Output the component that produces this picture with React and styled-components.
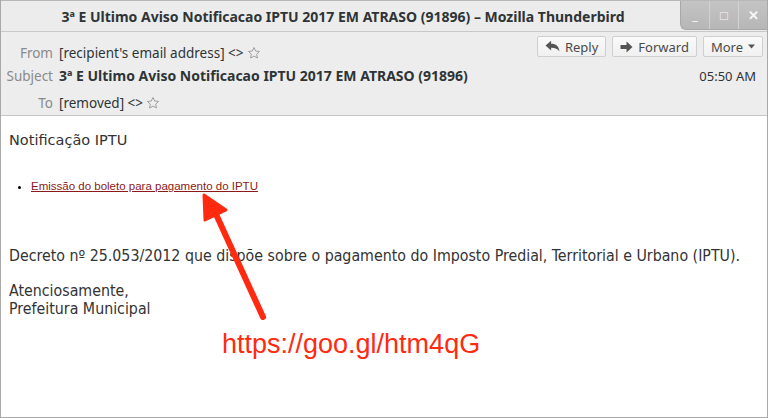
import React from 'react'
import styled, { createGlobalStyle } from 'styled-components'

const GlobalStyle = createGlobalStyle`
  html, body {
    margin: 0;
    padding: 0;
    background: #fff;
  }
`

const Window = styled.div`
  position: relative;
  width: 768px;
  height: 418px;
  box-sizing: border-box;
  border: 1px solid #a9a9a9;
  border-top: none;
  display: flex;
  flex-direction: column;
  overflow: hidden;
  font-family: 'Noto Sans', 'Open Sans', sans-serif;
`

const TitleBar = styled.div`
  position: relative;
  height: 32px;
  flex: none;
  display: flex;
  align-items: center;
  justify-content: center;
  background: #ececec;
  border-bottom: 1px solid #c8c8c8;
  border-top: 1px solid #b8b8b8;
  box-sizing: border-box;
  padding-right: 82px;
  font-size: 14px;
  font-weight: 700;
  color: #2e3436;
`

const WinButtons = styled.div`
  position: absolute;
  top: 0;
  right: 0;
  height: 28px;
  display: flex;
  background: linear-gradient(#c4c4c4, #b6b6b6);
  border-bottom-left-radius: 6px;
  border-left: 1px solid #a8a8a8;
  border-bottom: 1px solid #a8a8a8;
`

const WinButton = styled.div`
  width: 28px;
  display: flex;
  align-items: center;
  justify-content: center;
  color: #f6f6f6;
  font-size: 13px;
  font-weight: 700;
  & + & {
    border-left: 1px solid #d2d2d2;
  }
`

const Header = styled.div`
  flex: none;
  height: 84px;
  background: #ededed;
  border-bottom: 1px solid #c6c6c6;
  display: grid;
  grid-template-columns: 1fr auto;
  padding: 5px 4px 0 0;
  box-sizing: border-box;
`

const Fields = styled.div`
  display: grid;
  grid-template-columns: 52px 1fr;
  grid-template-rows: 27px 23px 29px;
  column-gap: 6px;
  align-items: end;
  font-size: 13.5px;
  color: #2e3436;
`

const Label = styled.div`
  text-align: right;
  color: #8a8a8a;
  padding-bottom: ${p => p.pb || 0}px;
`

const Value = styled.div`
  display: flex;
  align-items: center;
  gap: 3px;
  white-space: nowrap;
  font-weight: ${p => (p.bold ? 700 : 400)};
  font-size: ${p => (p.bold ? '14px' : 'inherit')};
  padding-bottom: ${p => p.pb || 0}px;
`

const Side = styled.div`
  display: flex;
  flex-direction: column;
  align-items: flex-end;
  margin-top: -1px;
`

const Buttons = styled.div`
  display: flex;
  gap: 6px;
`

const Button = styled.div`
  height: 21px;
  box-sizing: border-box;
  padding: 0 7px;
  display: flex;
  align-items: center;
  gap: 5px;
  background: linear-gradient(#fafafa, #f0f0f0);
  border: 1px solid #cfcfcf;
  border-radius: 2px;
  font-size: 13px;
  color: #4a4a4a;
`

const Time = styled.div`
  margin-top: 10px;
  padding-right: 7px;
  font-size: 13px;
  color: #2e3436;
`

const Body = styled.div`
  position: relative;
  flex: 1;
  background: #fff;
  padding: 16px 8px 0;
  color: #333;
  font-family: 'DejaVu Sans Condensed', 'DejaVu Sans', sans-serif;
  font-stretch: condensed;
`

const Heading = styled.div`
  font-size: 14.5px;
  font-family: 'DejaVu Sans', sans-serif;
  font-stretch: normal;
  font-weight: 400;
  color: #333;
  margin-bottom: 32px;
`

const List = styled.ul`
  margin: 0 0 55px;
  padding-left: 22px;
  font-size: 11.5px;
  font-family: 'Liberation Sans', Arial, sans-serif;
  li::marker {
    color: #000;
  }
`

const Link = styled.a`
  color: #8b1a1a;
  text-decoration: underline;
`

const Para = styled.p`
  margin: 0 0 17px;
  font-size: 15.8px;
  line-height: 18px;
  white-space: nowrap;
`

const Annotation = styled.div`
  padding-left: 213px;
  margin-top: -6px;
  font-family: 'Liberation Sans', Arial, sans-serif;
  font-stretch: normal;
  font-size: 27px;
  color: #ff2a0f;
`

const ArrowLayer = styled.svg`
  position: absolute;
  left: 0;
  top: 0;
  pointer-events: none;
`

const Star = () => (
  <svg width="14" height="14" viewBox="0 0 24 24" fill="none" stroke="#9a9a9a" strokeWidth="1.6" strokeLinejoin="round">
    <path d="M12 2.5l2.9 6.1 6.6.8-4.9 4.6 1.3 6.6L12 17.3l-5.9 3.3 1.3-6.6-4.9-4.6 6.6-.8z" />
  </svg>
)

const ReplyIcon = () => (
  <svg width="15" height="13" viewBox="0 0 16 14">
    <path d="M0.5 6 L6.5 0.8 V4 C11.5 4 15 6.5 15.5 12.5 C13.8 9.6 11 8.4 6.5 8.4 V11.4 Z" fill="#555" />
  </svg>
)

const ForwardIcon = () => (
  <svg width="13" height="12" viewBox="0 0 13 12">
    <path d="M0.5 4 H6.5 V0.5 L12.5 6 L6.5 11.5 V8 H0.5 Z" fill="#555" />
  </svg>
)

const Caret = () => (
  <svg width="7" height="5" viewBox="0 0 7 5">
    <path d="M0 0.5 H7 L3.5 4.5 Z" fill="#555" />
  </svg>
)

const title = '3ª E Ultimo Aviso Notificacao IPTU 2017 EM ATRASO (91896)'

const App = () => (
  <Window>
    <GlobalStyle />
    <TitleBar>
      {title} – Mozilla Thunderbird
      <WinButtons>
        <WinButton>_</WinButton>
        <WinButton>□</WinButton>
        <WinButton>✕</WinButton>
      </WinButtons>
    </TitleBar>
    <Header>
      <Fields>
        <Label pb={2}>From</Label>
        <Value pb={2}>[recipient's email address] &lt;&gt;<Star /></Value>
        <Label pb={2}>Subject</Label>
        <Value bold pb={2}>{title}</Value>
        <Label pb={4}>To</Label>
        <Value pb={4}>[removed] &lt;&gt;<Star /></Value>
      </Fields>
      <Side>
        <Buttons>
          <Button><ReplyIcon />Reply</Button>
          <Button><ForwardIcon />Forward</Button>
          <Button>More<Caret /></Button>
        </Buttons>
        <Time>05:50 AM</Time>
      </Side>
    </Header>
    <Body>
      <Heading>Notificação IPTU</Heading>
      <List>
        <li><Link>Emissão do boleto para pagamento do IPTU </Link></li>
      </List>
      <Para>Decreto nº 25.053/2012 que dispõe sobre o pagamento do Imposto Predial, Territorial e Urbano (IPTU).</Para>
      <Para>Atenciosamente,<br />Prefeitura Municipal</Para>
      <Annotation>https://goo.gl/htm4qG</Annotation>
      <ArrowLayer width="766" height="300">
        <line x1="262" y1="201" x2="214" y2="96" stroke="#ff2a0f" strokeWidth="6" strokeLinecap="round" />
        <path d="M203 79 L225 94 L204 104 Z" fill="#ff2a0f" stroke="#ff2a0f" strokeWidth="3" strokeLinejoin="round" />
      </ArrowLayer>
    </Body>
  </Window>
)

export default App
